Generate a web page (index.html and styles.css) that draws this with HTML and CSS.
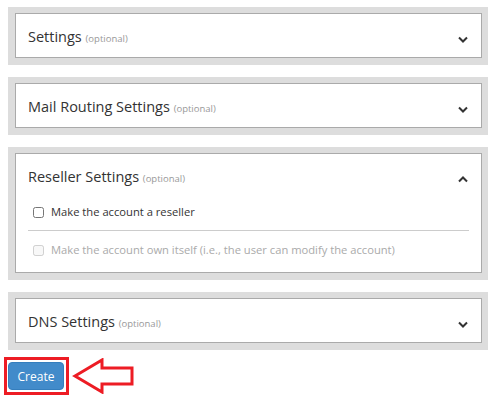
FILE: index.html
```html
<!DOCTYPE html>
<html lang="en">
<head>
    <meta charset="UTF-8">
    <title>Create Account</title>
    <link rel="stylesheet" href="styles.css">
</head>
<body>
    <div class="form">
        <div class="panel">
            <div class="panel-inner">
                <div class="panel-head">
                    <span class="title">Settings <small>(optional)</small></span>
                    <svg class="chevron" width="10" height="7" viewBox="0 0 10 7"><path d="M1 1.5 L5 5.5 L9 1.5" fill="none" stroke="#333" stroke-width="2"/></svg>
                </div>
            </div>
        </div>
        <div class="panel">
            <div class="panel-inner">
                <div class="panel-head">
                    <span class="title">Mail Routing Settings <small>(optional)</small></span>
                    <svg class="chevron" width="10" height="7" viewBox="0 0 10 7"><path d="M1 1.5 L5 5.5 L9 1.5" fill="none" stroke="#333" stroke-width="2"/></svg>
                </div>
            </div>
        </div>
        <div class="panel">
            <div class="panel-inner">
                <div class="panel-head">
                    <span class="title">Reseller Settings <small>(optional)</small></span>
                    <svg class="chevron" width="10" height="7" viewBox="0 0 10 7"><path d="M1 5.5 L5 1.5 L9 5.5" fill="none" stroke="#333" stroke-width="2"/></svg>
                </div>
                <div class="panel-body">
                    <label class="check"><input type="checkbox"> Make the account a reseller</label>
                    <label class="check disabled"><input type="checkbox" disabled> Make the account own itself (i.e., the user can modify the account)</label>
                </div>
            </div>
        </div>
        <div class="panel">
            <div class="panel-inner">
                <div class="panel-head">
                    <span class="title">DNS Settings <small>(optional)</small></span>
                    <svg class="chevron" width="10" height="7" viewBox="0 0 10 7"><path d="M1 1.5 L5 5.5 L9 1.5" fill="none" stroke="#333" stroke-width="2"/></svg>
                </div>
            </div>
        </div>
        <div class="actions">
            <span class="highlight"><button class="btn-create">Create</button></span>
            <svg class="arrow" width="64" height="36" viewBox="0 0 64 36">
                <polygon points="3,18 30,2 30,10 60,10 60,26 30,26 30,34" fill="none" stroke="#ed1c24" stroke-width="3"/>
            </svg>
        </div>
    </div>
</body>
</html>
```

FILE: styles.css
```css
body {
    margin: 0;
    padding: 7px 8px;
    font-family: "Open Sans", Arial, sans-serif;
    color: #333;
    background-color: #fff;
}
.form {
    width: 480px;
}
.panel {
    background-color: #ddd;
    padding: 6px 6px 7px 7px;
    margin-bottom: 12px;
}
.panel-inner {
    background-color: #fff;
    border: 1px solid #aaa;
}
.panel-head {
    display: flex;
    align-items: center;
    justify-content: space-between;
    padding: 13px 12px 8px 12px;
    height: 22px;
}
.title {
    font-size: 14.5px;
    line-height: 22px;
}
.title small {
    font-size: 9.5px;
    color: #999;
}
.chevron {
    display: block;
    margin-top: 3px;
    margin-right: 1px;
}
.panel-body {
    padding: 5px 12px 12px 12px;
}
.check {
    display: flex;
    align-items: center;
    gap: 7px;
    padding-left: 5px;
    font-size: 11.2px;
    line-height: 20px;
}
.check input {
    margin: 0;
    width: 11px;
    height: 11px;
}
.check + .check {
    border-top: 1px solid #ccc;
    padding-top: 9px;
    margin-top: 8px;
}
.disabled {
    color: #aaa;
}
.actions {
    display: flex;
    align-items: center;
    margin-top: -5px;
    margin-left: -4px;
}
.highlight {
    display: inline-block;
    border: 3px solid #ed1c24;
    padding: 2px 2px 2px 1px;
}
.btn-create {
    display: block;
    width: 56px;
    height: 28px;
    padding: 0;
    background-color: #428bca;
    color: #fff;
    border: 1px solid #357ebd;
    border-radius: 4px;
    font-family: "Open Sans", Arial, sans-serif;
    font-size: 12px;
    cursor: pointer;
}
.arrow {
    display: block;
    margin-left: 3px;
}
```
